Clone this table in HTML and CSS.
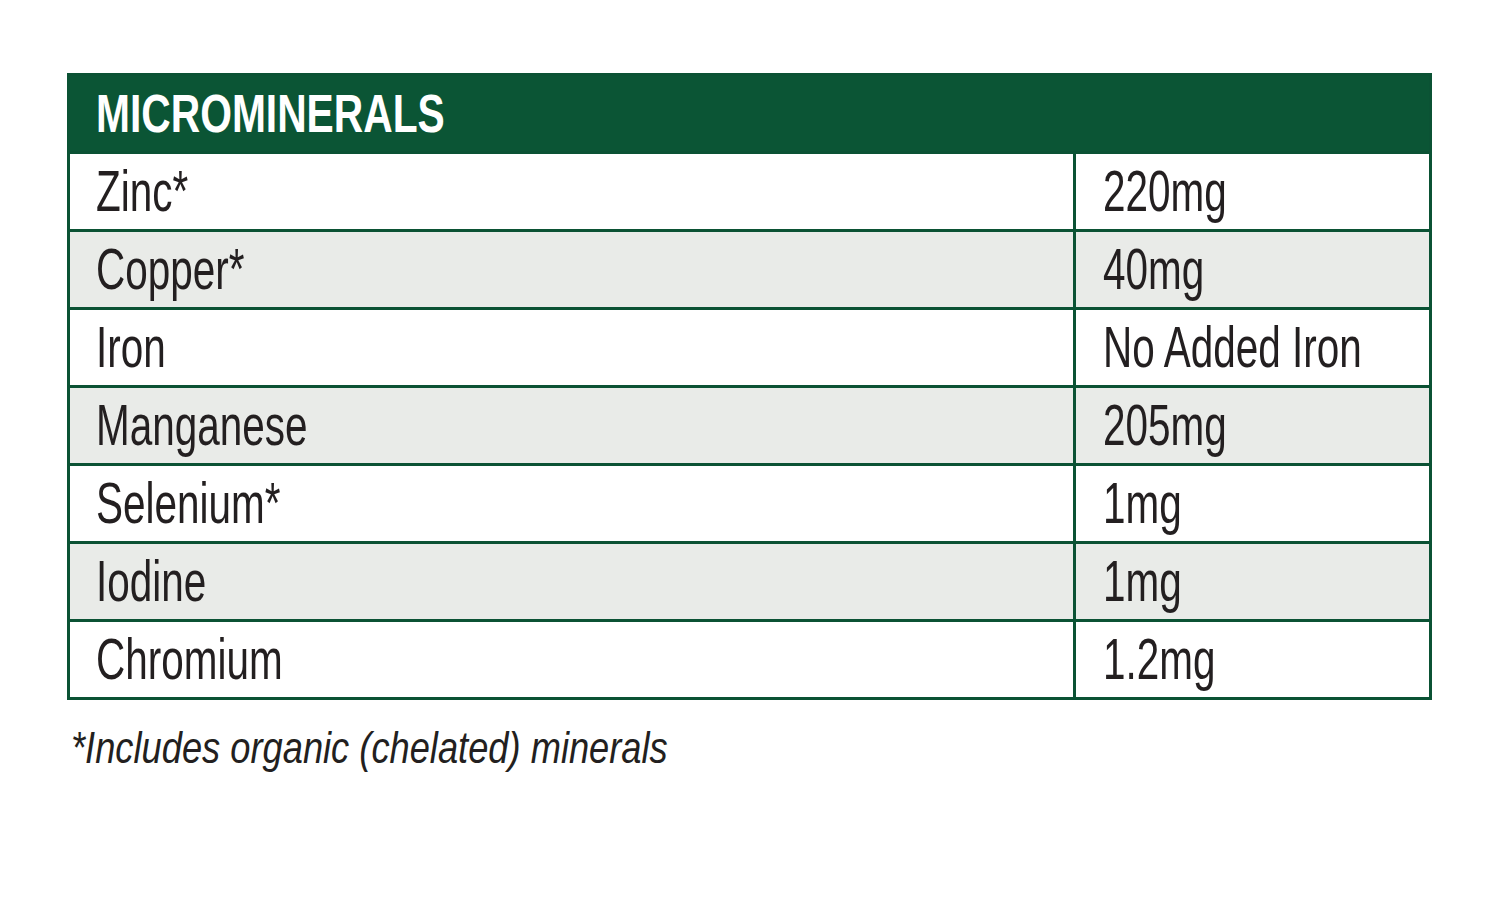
FILE: index.html
```html
<!DOCTYPE html>
<html>
<head>
<meta charset="utf-8">
<link rel="stylesheet" href="styles.css">
</head>
<body>
<div class="page">
  <div class="table">
    <div class="head"><span class="t">MICROMINERALS</span></div>
    <div class="row"><div class="cell name"><span class="t">Zinc*</span></div><div class="cell val"><span class="t">220mg</span></div></div>
    <div class="row alt"><div class="cell name"><span class="t">Copper*</span></div><div class="cell val"><span class="t">40mg</span></div></div>
    <div class="row"><div class="cell name"><span class="t">Iron</span></div><div class="cell val"><span class="t">No Added Iron</span></div></div>
    <div class="row alt"><div class="cell name"><span class="t">Manganese</span></div><div class="cell val"><span class="t">205mg</span></div></div>
    <div class="row"><div class="cell name"><span class="t">Selenium*</span></div><div class="cell val"><span class="t">1mg</span></div></div>
    <div class="row alt"><div class="cell name"><span class="t">Iodine</span></div><div class="cell val"><span class="t">1mg</span></div></div>
    <div class="row"><div class="cell name"><span class="t">Chromium</span></div><div class="cell val"><span class="t">1.2mg</span></div></div>
  </div>
  <p class="note"><span class="t">*Includes organic (chelated) minerals</span></p>
</div>
</body>
</html>
```

FILE: styles.css
```css
* { box-sizing: border-box; }
html, body { margin: 0; padding: 0; background: #ffffff; }
body { font-family: "Liberation Sans", Arial, sans-serif; color: #231f20; }
.page { width: 1500px; height: 923px; padding: 73px 68px 0 67px; }
.table {
  width: 1365px;
  background: #0b5234;
  padding: 3px;
  display: flex;
  flex-direction: column;
  gap: 3px;
}
.head {
  height: 75px;
  background: #0b5535;
  color: #ffffff;
  font-weight: bold;
  font-size: 54px;
  line-height: 75px;
  padding-left: 26px;
  white-space: nowrap;
}
.head .t { transform: scaleX(0.755); }
.row {
  height: 75px;
  display: grid;
  grid-template-columns: 1003px 353px;
  column-gap: 3px;
}
.cell {
  background: #ffffff;
  font-size: 57px;
  line-height: 75px;
  white-space: nowrap;
}
.cell .t { transform: scaleX(0.71); }
.row.alt .cell { background: #e9ebe8; }
.name { padding-left: 26px; }
.val { padding-left: 27px; }
.t { display: inline-block; transform-origin: left center; }
.note {
  margin: 18px 0 0 4px;
  font-size: 45px;
  font-style: italic;
  line-height: 60px;
  white-space: nowrap;
  color: #231f20;
}
.note .t { transform: scaleX(0.806); }
```
